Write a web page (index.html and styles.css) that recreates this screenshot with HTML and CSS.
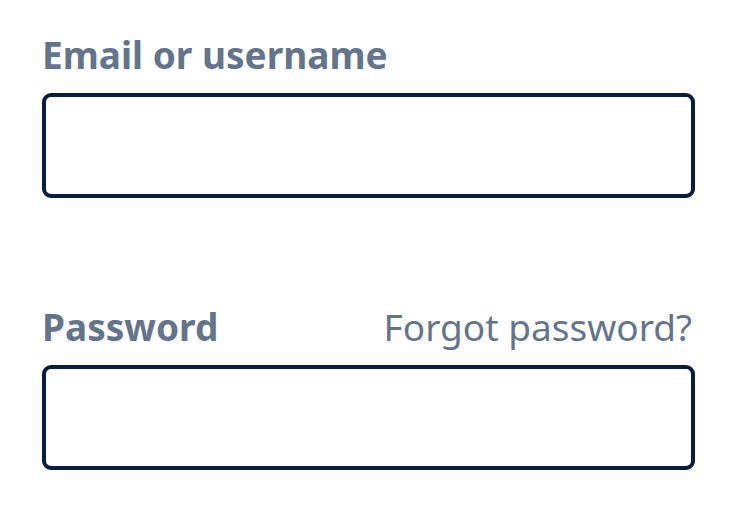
FILE: index.html
```html
<!DOCTYPE html>
<html>
<head>
<meta charset="utf-8">
<link rel="stylesheet" href="styles.css">
</head>
<body>
<form class="form">
  <div class="field">
    <div class="label-row">
      <label class="label" for="email">Email or username</label>
    </div>
    <input class="input" id="email" type="text">
  </div>
  <div class="field field-2">
    <div class="label-row">
      <label class="label" for="pw">Password</label>
      <a class="link" href="#">Forgot password?</a>
    </div>
    <input class="input" id="pw" type="password">
  </div>
</form>
</body>
</html>
```
FILE: styles.css
```css
html, body {
  margin: 0;
  padding: 0;
  background: #ffffff;
}
.form {
  width: 653px;
  padding: 30px 0 0 42px;
  font-family: "Noto Sans", "Open Sans", sans-serif;
}
.field-2 {
  margin-top: 104px;
}
.label-row {
  display: flex;
  justify-content: space-between;
  align-items: baseline;
  height: 63px;
  line-height: 50px;
}
.label {
  font-size: 37px;
  font-weight: 700;
  color: #64748b;
}
.link {
  font-size: 37px;
  font-weight: 400;
  color: #64748b;
  text-decoration: none;
  margin-right: 3px;
}
.input {
  display: block;
  box-sizing: border-box;
  width: 653px;
  height: 105px;
  margin: 0;
  border: 4px solid #0a1e3b;
  border-radius: 9px;
  background: #fff;
  outline: none;
}
```
